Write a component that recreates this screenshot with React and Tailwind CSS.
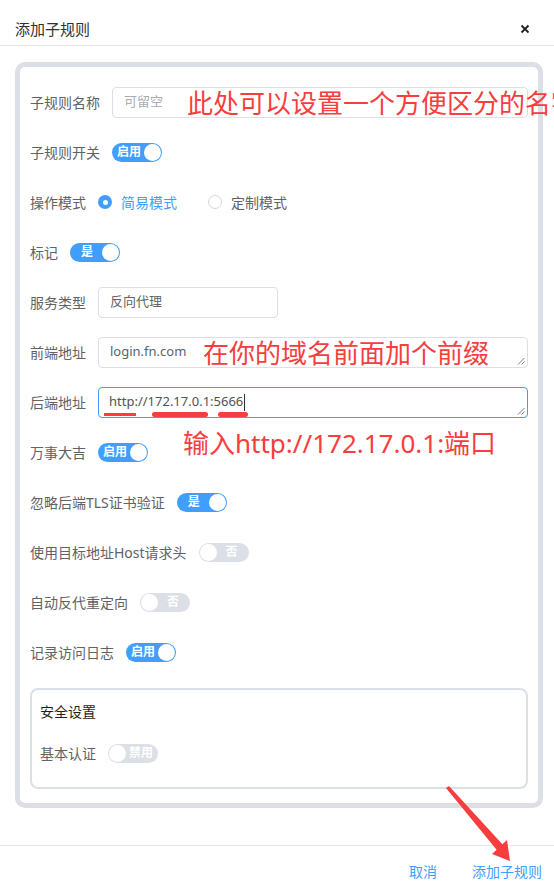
import React from "react";

const font = {
  fontFamily: '"Noto Sans", "Noto Sans CJK SC", sans-serif',
};

function Toggle({ on, text }) {
  if (on) {
    return (
      <div className="flex h-[19px] w-[50px] shrink-0 items-center rounded-full bg-[#409eff] pl-[2px] pr-[1px]">
        <span className="flex-1 text-center text-[12px] font-semibold leading-none text-white">
          {text}
        </span>
        <span className="h-[17px] w-[17px] rounded-full bg-white" />
      </div>
    );
  }
  return (
    <div className="flex h-[19px] w-[50px] shrink-0 items-center rounded-full bg-[#dcdfe6] pl-[1px] pr-[2px]">
      <span className="h-[17px] w-[17px] rounded-full bg-white" />
      <span className="flex-1 text-center text-[12px] font-semibold leading-none text-white">
        {text}
      </span>
    </div>
  );
}

function Radio({ checked, label }) {
  return (
    <div className="flex items-center gap-[9px]">
      {checked ? (
        <span className="flex h-[14px] w-[14px] items-center justify-center rounded-full bg-[#409eff]">
          <span className="h-[5px] w-[5px] rounded-full bg-white" />
        </span>
      ) : (
        <span className="h-[14px] w-[14px] rounded-full border border-[#d4d7de] bg-white" />
      )}
      <span
        className={
          "text-[14px] " + (checked ? "text-[#409eff]" : "text-[#606266]")
        }
      >
        {label}
      </span>
    </div>
  );
}

function Grip() {
  return (
    <svg
      className="absolute bottom-[2px] right-[2px]"
      width="8"
      height="8"
      viewBox="0 0 8 8"
    >
      <path d="M7.5 1 L1 7.5 M7.5 4.5 L4.5 7.5" stroke="#7a7a7a" strokeWidth="1" />
    </svg>
  );
}

function Row({ label, children }) {
  return (
    <div className="flex h-[50px] items-center gap-[12px]">
      <span className="shrink-0 whitespace-nowrap text-[14px] text-[#606266]">
        {label}
      </span>
      {children}
    </div>
  );
}

export default function App() {
  return (
    <div
      className="relative flex h-[890px] w-full flex-col overflow-hidden bg-white"
      style={font}
    >
      {/* header */}
      <div className="flex h-[46px] shrink-0 justify-between border-b border-[#e4e7ed] pl-[15px] pr-[24px] pt-[19px]">
        <span className="text-[15px] leading-[20px] text-[#303133]">添加子规则</span>
        <svg className="mt-[5px]" width="10" height="10" viewBox="0 0 10 10">
          <path d="M1.5 1.5 L8.5 8.5 M8.5 1.5 L1.5 8.5" stroke="#1f1f1f" strokeWidth="1.8" />
        </svg>
      </div>

      {/* form panel */}
      <div className="ml-[15px] mr-[11px] mt-[16px] rounded-[10px] border-[5px] border-[#dcdfe6] pb-[14px] pl-[10px] pr-[10px] pt-[10px]">
        <Row label="子规则名称">
          <div className="flex h-[31px] flex-1 items-center rounded-[4px] border border-[#dcdfe6] px-[11px] text-[13px] text-[#a8abb2]">
            可留空
          </div>
        </Row>
        <Row label="子规则开关">
          <Toggle on text="启用" />
        </Row>
        <Row label="操作模式">
          <div className="flex items-center gap-[31px]">
            <Radio checked label="简易模式" />
            <Radio label="定制模式" />
          </div>
        </Row>
        <Row label="标记">
          <Toggle on text="是" />
        </Row>
        <Row label="服务类型">
          <div className="flex h-[31px] w-[180px] items-center rounded-[4px] border border-[#dcdfe6] px-[11px] text-[13px] text-[#606266]">
            反向代理
          </div>
        </Row>
        <Row label="前端地址">
          <div className="relative flex h-[31px] flex-1 items-center rounded-[4px] border border-[#dcdfe6] px-[11px] text-[13px] text-[#606266]">
            login.fn.com
            <Grip />
          </div>
        </Row>
        <Row label="后端地址">
          <div className="relative flex h-[31px] flex-1 items-center rounded-[4px] border border-[#409eff] px-[10px] text-[13px] text-[#505256]">
            http://172.17.0.1:5666
            <span className="ml-px h-[17px] w-px bg-[#303133]" />
            <Grip />
          </div>
        </Row>
        <Row label="万事大吉">
          <Toggle on text="启用" />
        </Row>
        <Row label="忽略后端TLS证书验证">
          <Toggle on text="是" />
        </Row>
        <Row label="使用目标地址Host请求头">
          <Toggle text="否" />
        </Row>
        <Row label="自动反代重定向">
          <Toggle text="否" />
        </Row>
        <Row label="记录访问日志">
          <Toggle on text="启用" />
        </Row>

        <div className="mt-[11px] rounded-[8px] border-2 border-[#dcdfe6] px-[8px] pb-[19px] pt-[12px]">
          <div className="text-[14px] leading-[20px] text-[#1f1f1f]">安全设置</div>
          <div className="mt-[16px] flex h-[30px] items-center gap-[12px]">
            <span className="text-[14px] text-[#606266]">基本认证</span>
            <Toggle text="禁用" />
          </div>
        </div>
      </div>

      {/* footer */}
      <div className="mt-[37px] flex h-[44px] shrink-0 justify-end gap-[35px] border-t border-[#e4e7ed] pr-[12px] pt-[16px]">
        <span className="text-[14px] leading-[20px] text-[#409eff]">取消</span>
        <span className="text-[14px] leading-[20px] text-[#409eff]">添加子规则</span>
      </div>

      {/* red annotations */}
      <div className="absolute left-[187px] top-[88px] whitespace-nowrap text-[26px] leading-[30px] text-[#f73d3d]">
        此处可以设置一个方便区分的名字
      </div>
      <div className="absolute left-[203px] top-[338px] whitespace-nowrap text-[26px] leading-[30px] text-[#f73d3d]">
        在你的域名前面加个前缀
      </div>
      <div className="absolute left-[183px] top-[428px] whitespace-nowrap text-[26px] leading-[30px] text-[#f73d3d]">
        输入http://172.17.0.1:端口
      </div>
      <div className="absolute left-[104px] top-[413px] h-[3px] w-[32px] bg-[#f73d3d]" />
      <div className="absolute left-[152px] top-[412px] h-[5px] w-[56px] rounded-full bg-[#f73d3d]" />
      <div className="absolute left-[218px] top-[412px] h-[5px] w-[30px] rounded-full bg-[#f73d3d]" />
      <svg
        className="absolute left-0 top-0"
        width="554"
        height="890"
        viewBox="0 0 554 890"
      >
        <polygon
          points="449,786 502.4,844.3 507,840 510,861 492,854 496.6,849.7 446,788"
          fill="#f73d3d"
        />
      </svg>
    </div>
  );
}
